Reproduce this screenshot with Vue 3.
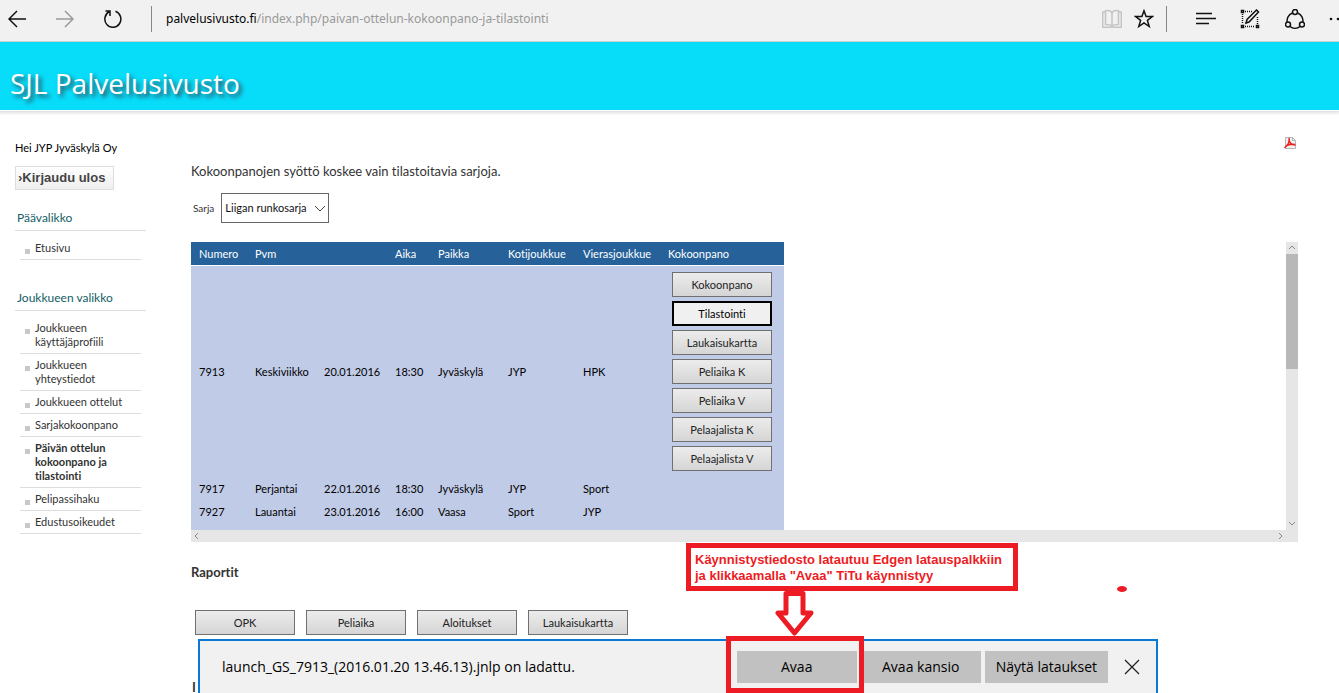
<script setup>
import { ref } from 'vue'

const mainMenu = ref([{ label: 'Etusivu' }])
const teamMenu = ref([
  { label: 'Joukkueen käyttäjäprofiili' },
  { label: 'Joukkueen yhteystiedot' },
  { label: 'Joukkueen ottelut' },
  { label: 'Sarjakokoonpano' },
  { label: 'Päivän ottelun kokoonpano ja tilastointi', active: true },
  { label: 'Pelipassihaku' },
  { label: 'Edustusoikeudet' },
])
const games = ref([
  {
    id: '7913', day: 'Keskiviikko', date: '20.01.2016', time: '18:30', place: 'Jyväskylä', home: 'JYP', away: 'HPK',
    actions: ['Kokoonpano', 'Tilastointi', 'Laukaisukartta', 'Peliaika K', 'Peliaika V', 'Pelaajalista K', 'Pelaajalista V'],
  },
  { id: '7917', day: 'Perjantai', date: '22.01.2016', time: '18:30', place: 'Jyväskylä', home: 'JYP', away: 'Sport', actions: [] },
  { id: '7927', day: 'Lauantai', date: '23.01.2016', time: '16:00', place: 'Vaasa', home: 'Sport', away: 'JYP', actions: [] },
])
const reports = ref(['OPK', 'Peliaika', 'Aloitukset', 'Laukaisukartta'])
const series = ref('Liigan runkosarja')
const focused = ref('Tilastointi')
</script>

<template>
  <div class="page">
    <header class="toolbar">
      <button class="tool back" aria-label="Takaisin">
        <svg width="18" height="18" viewBox="0 0 18 18"><path d="M18 9H1M9 1L1 9l8 8" /></svg>
      </button>
      <button class="tool forward" aria-label="Eteenpäin">
        <svg width="18" height="18" viewBox="0 0 18 18"><path d="M0 9h17M9 1l8 8-8 8" /></svg>
      </button>
      <button class="tool reload" aria-label="Päivitä">
        <svg width="18" height="20" viewBox="0 0 18 20"><path d="M5.500 2.500A8 8.300 0 1 0 11.500 2.200M1.500 2H6v5" /></svg>
      </button>
      <span class="divider first"></span>
      <div class="address"><span class="host">palvelusivusto.fi</span>/index.php/paivan-ottelun-kokoonpano-ja-tilastointi</div>
      <button class="tool book" aria-label="Lukunäkymä">
        <svg width="20" height="20" viewBox="0 0 20 20"><path d="M10 3.500C8.500 1.500 5 1.500 3.500 1.800V15.500c3-.2 5 .2 6.500 1.500 1.500-1.300 3.500-1.700 6.500-1.500V1.800c-1.500-.3-5-.3-6.500 1.700zM10 3.500v14M3.500 3H.7v15.300h18.600V3h-2.800" /></svg>
      </button>
      <button class="tool star" aria-label="Suosikki">
        <svg width="20" height="20" viewBox="0 0 20 20"><path d="M10 1.800l2.100 5.800h6.200l-4.900 3.800 1.800 6.100L10 13.800l-5.200 3.700 1.800-6.100L1.700 7.600h6.200z" /></svg>
      </button>
      <span class="divider second"></span>
      <button class="tool hub" aria-label="Keskus">
        <svg width="20" height="14" viewBox="0 0 20 14"><path d="M0 1.500h16M0 6.500h20M0 11.500h13" /></svg>
      </button>
      <button class="tool note" aria-label="Verkkomuistiinpano">
        <svg width="20" height="20" viewBox="0 0 20 20">
          <path d="M1.500 1.500h2v2h-2zM1.500 16.500h2v2h-2zM16.500 16.500h2v2h-2z" />
          <path class="dots" d="M5 2.500h8M2.500 5v10M5 17.500h10M17.500 8v7" />
          <path d="M6 14l1-3.500L16.500 1l2 2L9 13z" />
        </svg>
      </button>
      <button class="tool share" aria-label="Jaa">
        <svg width="20" height="20" viewBox="0 0 20 20">
          <circle cx="10" cy="3" r="2.500" /><circle cx="3" cy="15.500" r="2.500" /><circle cx="17" cy="15.500" r="2.500" />
          <path d="M7.500 4A8 8 0 0 0 2.200 13M12.500 4a8 8 0 0 1 5.300 9M5 17.500a8 8 0 0 0 10 0" />
        </svg>
      </button>
      <button class="tool more" aria-label="Lisää">
        <svg width="20" height="4" viewBox="0 0 20 4"><circle cx="2" cy="2" r="1.300" /><circle cx="9" cy="2" r="1.300" /><circle cx="16" cy="2" r="1.300" /></svg>
      </button>
    </header>

    <div class="banner"><h1>SJL Palvelusivusto</h1></div>

    <div class="layout">
      <aside class="sidebar">
        <p class="greeting">Hei JYP Jyväskylä Oy</p>
        <button class="logout"><span>›</span>Kirjaudu ulos</button>
        <nav class="menu">
          <h2>Päävalikko</h2>
          <ul>
            <li v-for="item in mainMenu" :key="item.label"><a href="#">{{ item.label }}</a></li>
          </ul>
        </nav>
        <nav class="menu">
          <h2>Joukkueen valikko</h2>
          <ul>
            <li v-for="item in teamMenu" :key="item.label" :class="{ active: item.active }"><a href="#">{{ item.label }}</a></li>
          </ul>
        </nav>
      </aside>

      <main class="content">
        <a class="pdf" href="#" aria-label="PDF">
          <svg width="12" height="12" viewBox="0 0 12 12">
            <path d="M1.500.5h7l3 3v8h-10z" fill="#f2f2f2" stroke="#b5b5b5" />
            <path d="M8.500.5v3h3" fill="none" stroke="#b5b5b5" />
            <path d="M5 1c1 3 0 6-4.500 10M5 2c0 4 2 6 6.500 6M2 9c3-2 6-2 9-1.500" fill="none" stroke="#f0201c" stroke-width="1.500" />
          </svg>
        </a>
        <p class="intro">Kokoonpanojen syöttö koskee vain tilastoitavia sarjoja.</p>
        <div class="filter">
          <label for="series">Sarja</label>
          <div class="select-box">
            <select id="series" v-model="series"><option>Liigan runkosarja</option></select>
            <svg width="12" height="8" viewBox="0 0 12 8"><path d="M1 1l5 5 5-5" /></svg>
          </div>
        </div>

        <div class="scroller">
          <div class="viewport">
            <table>
              <colgroup>
                <col class="c-id" /><col class="c-day" /><col class="c-date" /><col class="c-time" />
                <col class="c-place" /><col class="c-home" /><col class="c-away" /><col class="c-act" />
              </colgroup>
              <thead>
                <tr>
                  <th>Numero</th><th colspan="2">Pvm</th><th>Aika</th><th>Paikka</th>
                  <th>Kotijoukkue</th><th>Vierasjoukkue</th><th>Kokoonpano</th>
                </tr>
              </thead>
              <tbody>
                <tr v-for="g in games" :key="g.id">
                  <td>{{ g.id }}</td><td>{{ g.day }}</td><td>{{ g.date }}</td><td>{{ g.time }}</td>
                  <td>{{ g.place }}</td><td>{{ g.home }}</td><td>{{ g.away }}</td>
                  <td>
                    <div v-if="g.actions.length" class="actions">
                      <button v-for="a in g.actions" :key="a" class="push" :class="{ focused: a === focused }" @click="focused = a">{{ a }}</button>
                    </div>
                  </td>
                </tr>
                <tr><td colspan="8"></td></tr>
              </tbody>
            </table>
          </div>
          <div class="vbar">
            <svg width="12" height="12" viewBox="0 0 12 12"><path d="M3 7l3-3 3 3" /></svg>
            <span class="thumb"></span>
            <svg width="12" height="12" viewBox="0 0 12 12"><path d="M3 4l3 3 3-3" /></svg>
          </div>
          <div class="hbar">
            <svg width="12" height="12" viewBox="0 0 12 12"><path d="M7 3L4 6l3 3" /></svg>
            <svg width="12" height="12" viewBox="0 0 12 12"><path d="M5 3l3 3-3 3" /></svg>
          </div>
        </div>

        <h3>Raportit</h3>
        <div class="reports">
          <button v-for="r in reports" :key="r" class="push">{{ r }}</button>
        </div>
        <h3 class="next">I</h3>
      </main>
    </div>

    <div class="download">
      <p>launch_GS_7913_(2016.01.20 13.46.13).jnlp on ladattu.</p>
      <button class="dl">Avaa</button>
      <button class="dl">Avaa kansio</button>
      <button class="dl">Näytä lataukset</button>
      <button class="close" aria-label="Sulje">
        <svg width="16" height="16" viewBox="0 0 16 16"><path d="M1 1l14 14M15 1L1 15" /></svg>
      </button>
    </div>

    <div class="callout">Käynnistystiedosto latautuu Edgen latauspalkkiin<br />ja klikkaamalla "Avaa" TiTu käynnistyy</div>
    <svg class="arrow" width="40" height="48" viewBox="0 0 40 48">
      <path d="M11 3.500h17v19.500h8L19.500 43 3 23h8z" />
    </svg>
    <span class="frame"></span>
    <span class="dot"></span>
  </div>
</template>

<style>
html, body { height: 100%; }
body { margin: 0; overflow: hidden; }
</style>

<style scoped>
* { box-sizing: border-box; }
.page {
  position: relative; height: 100vh; overflow: hidden; background: #fff; color: #333;
  font-family: Lato, "Open Sans", sans-serif; font-size: 11px; line-height: 14px; font-variant-ligatures: none;
}
p, h1, h2, h3, ul { margin: 0; padding: 0; }
button { font: inherit; color: inherit; padding: 0; margin: 0; font-variant-ligatures: none; }
a { color: inherit; text-decoration: none; }

.toolbar {
  display: flex; align-items: center; height: 42px; padding: 0 0 3px 8px;
  background: #f1f1f1; border-bottom: 1px solid #ccc; overflow: hidden;
}
.tool { flex: none; display: flex; border: 0; background: none; }
.tool svg { fill: none; stroke: #111; stroke-width: 1.5; }
.back { margin-right: 30px; }
.forward { margin-right: 30px; }
.forward svg { stroke: #999; }
.reload { margin-right: 29px; }
.divider { flex: none; width: 1px; height: 26px; background: #888; }
.address {
  flex: 1; min-width: 0; margin-left: 14px; overflow: hidden; white-space: nowrap; color: #999;
  font-family: "Noto Sans", sans-serif; font-size: 12px; line-height: 18px;
}
.host { color: #000; }
.book { margin-right: 12px; }
.tool.book svg { stroke: #c4c4c4; }
.star { margin-right: 12px; }
.second { margin-right: 29px; }
.hub { margin-right: 24px; }
.note { margin-right: 25px; }
.note .dots { stroke-dasharray: 1 1; }
.share { margin-right: 24px; }
.more { width: 10px; overflow: hidden; }
.tool.more svg { flex: none; fill: #111; stroke: none; }

.banner { height: 68px; padding: 23px 10px 0; background: #07dcf9; box-shadow: 0 1px #fff, 0 2px 3px 1px #ddd; }
h1 {
  font-family: "Open Sans", sans-serif; font-size: 28px; line-height: 36px; font-weight: 400; color: #fff;
  text-shadow: 3px 3px 4px #345;
}

.layout { display: flex; align-items: flex-start; }
.sidebar { flex: none; width: 191px; padding: 31px 45px 0 15px; }
.greeting { color: #000; font-size: 11px; line-height: 14px; white-space: nowrap; }
.logout {
  display: block; height: 24px; margin-top: 11px; padding: 0 8px 0 2px; border: 1px solid #ddd;
  background: linear-gradient(#fff, #eee); color: #444; white-space: nowrap;
  font: bold 13px/20px "Liberation Sans", sans-serif;
}
.menu { margin-top: 20px; }
.menu + .menu { margin-top: 30px; }
h2 {
  width: 131px; padding: 0 2px 5px; border-bottom: 1px solid #ddd; color: #135e66;
  font-size: 12px; line-height: 15px; font-weight: 400;
}
ul { width: 121px; margin-left: 5px; padding-top: 6px; list-style: none; }
li { position: relative; padding: 4px 15px 4px; border-bottom: 1px solid #ddd; }
li::before { content: ""; position: absolute; left: 5px; top: 12px; width: 5px; height: 5px; background: #c8c8c8; }
li a { display: block; width: 90px; }
.active { font-weight: 700; }

.content { position: relative; flex: 1; min-width: 0; padding: 52px 41px 0 0; }
.pdf { position: absolute; right: 43px; top: 27px; display: flex; }
.intro { font-size: 13px; line-height: 18px; }
.filter { display: flex; align-items: center; margin-top: 13px; padding-left: 2px; font-size: 10px; }
.select-box { position: relative; margin-left: 7px; }
.select-box select {
  appearance: none; width: 108px; height: 30px; padding: 0 3px; border: 1px solid #666; border-radius: 0;
  background: #fff; color: #111; font: 11px/14px Lato, sans-serif;
}
.select-box svg { position: absolute; right: 3px; top: 12px; fill: none; stroke: #444; pointer-events: none; }

.scroller { display: grid; grid-template-columns: 1fr 12px; grid-template-rows: 288px 12px; margin-top: 19px; }
.viewport { overflow: hidden; min-width: 0; }
table { width: 593px; table-layout: fixed; border-collapse: separate; border-spacing: 0; background: #c0cbe7; color: #000; }
.c-id { width: 56px; } .c-day { width: 69px; } .c-date { width: 71px; } .c-time { width: 43px; }
.c-place { width: 70px; } .c-home { width: 75px; } .c-away { width: 85px; } .c-act { width: 124px; }
th { height: 24px; padding: 0 0 0 8px; background: #266299; color: #fff; border-bottom: 1px solid #fff; font-weight: 400; text-align: left; white-space: nowrap; }
td { height: 23px; padding: 0 0 0 8px; white-space: nowrap; }
.actions { display: flex; flex-direction: column; gap: 4px; padding: 6px 4px; }
.push {
  width: 100px; height: 25px; border: 1px solid #707070; background: linear-gradient(#ececec, #d5d5d5);
  color: #222; text-align: center;
}
.focused { border: 2px solid #000; background: #f0f0f0; color: #000; }
.vbar { display: flex; flex-direction: column; background: #e6e6e6; }
.thumb { height: 115px; background: #b8b8b8; margin-bottom: auto; }
.hbar { grid-column: 1 / 3; display: flex; justify-content: space-between; padding-right: 12px; background: #e6e6e6; }
.vbar svg, .hbar svg { flex: none; fill: none; stroke: #888; }

h3 { margin-top: 21px; font-size: 13px; line-height: 18px; font-weight: 700; }
.reports { display: flex; gap: 11px; margin-top: 29px; padding-left: 4px; }
.next { margin-top: 46px; padding-left: 1px; line-height: 12px; }

.download {
  position: absolute; left: 198px; top: 639px; width: 960px; height: 60px; display: flex; align-items: flex-start;
  padding: 10px 16px 0 22px; border: 2px solid #0a78d4; background: #f1f1f1; color: #000;
  font-family: "Open Sans", sans-serif; font-size: 14px; line-height: 32px;
}
.download p { flex: 1; white-space: nowrap; }
.dl { min-width: 120px; height: 32px; margin-right: 4px; padding: 0 11px; border: 0; background: #c1c1c1; white-space: nowrap; }
.close { display: flex; margin: 8px 0 0 12px; border: 0; background: none; }
.close svg { fill: none; stroke: #222; stroke-width: 1.3; }

.callout {
  position: absolute; left: 686px; top: 543px; width: 332px; height: 48px; padding: 4px; border: 5px solid #ed1c24;
  background: #fff; color: #ed1c24; white-space: nowrap; font: bold 13px/16px "Liberation Sans", sans-serif;
}
.arrow { position: absolute; left: 775px; top: 590px; fill: #fff; stroke: #ed1c24; stroke-width: 5; stroke-linejoin: round; }
.frame { position: absolute; left: 726px; top: 636px; width: 138px; height: 57px; border: 5px solid #ed1c24; }
.dot { position: absolute; left: 1117px; top: 586px; width: 10px; height: 6px; border-radius: 50%; background: #ed1c24; }
</style>
